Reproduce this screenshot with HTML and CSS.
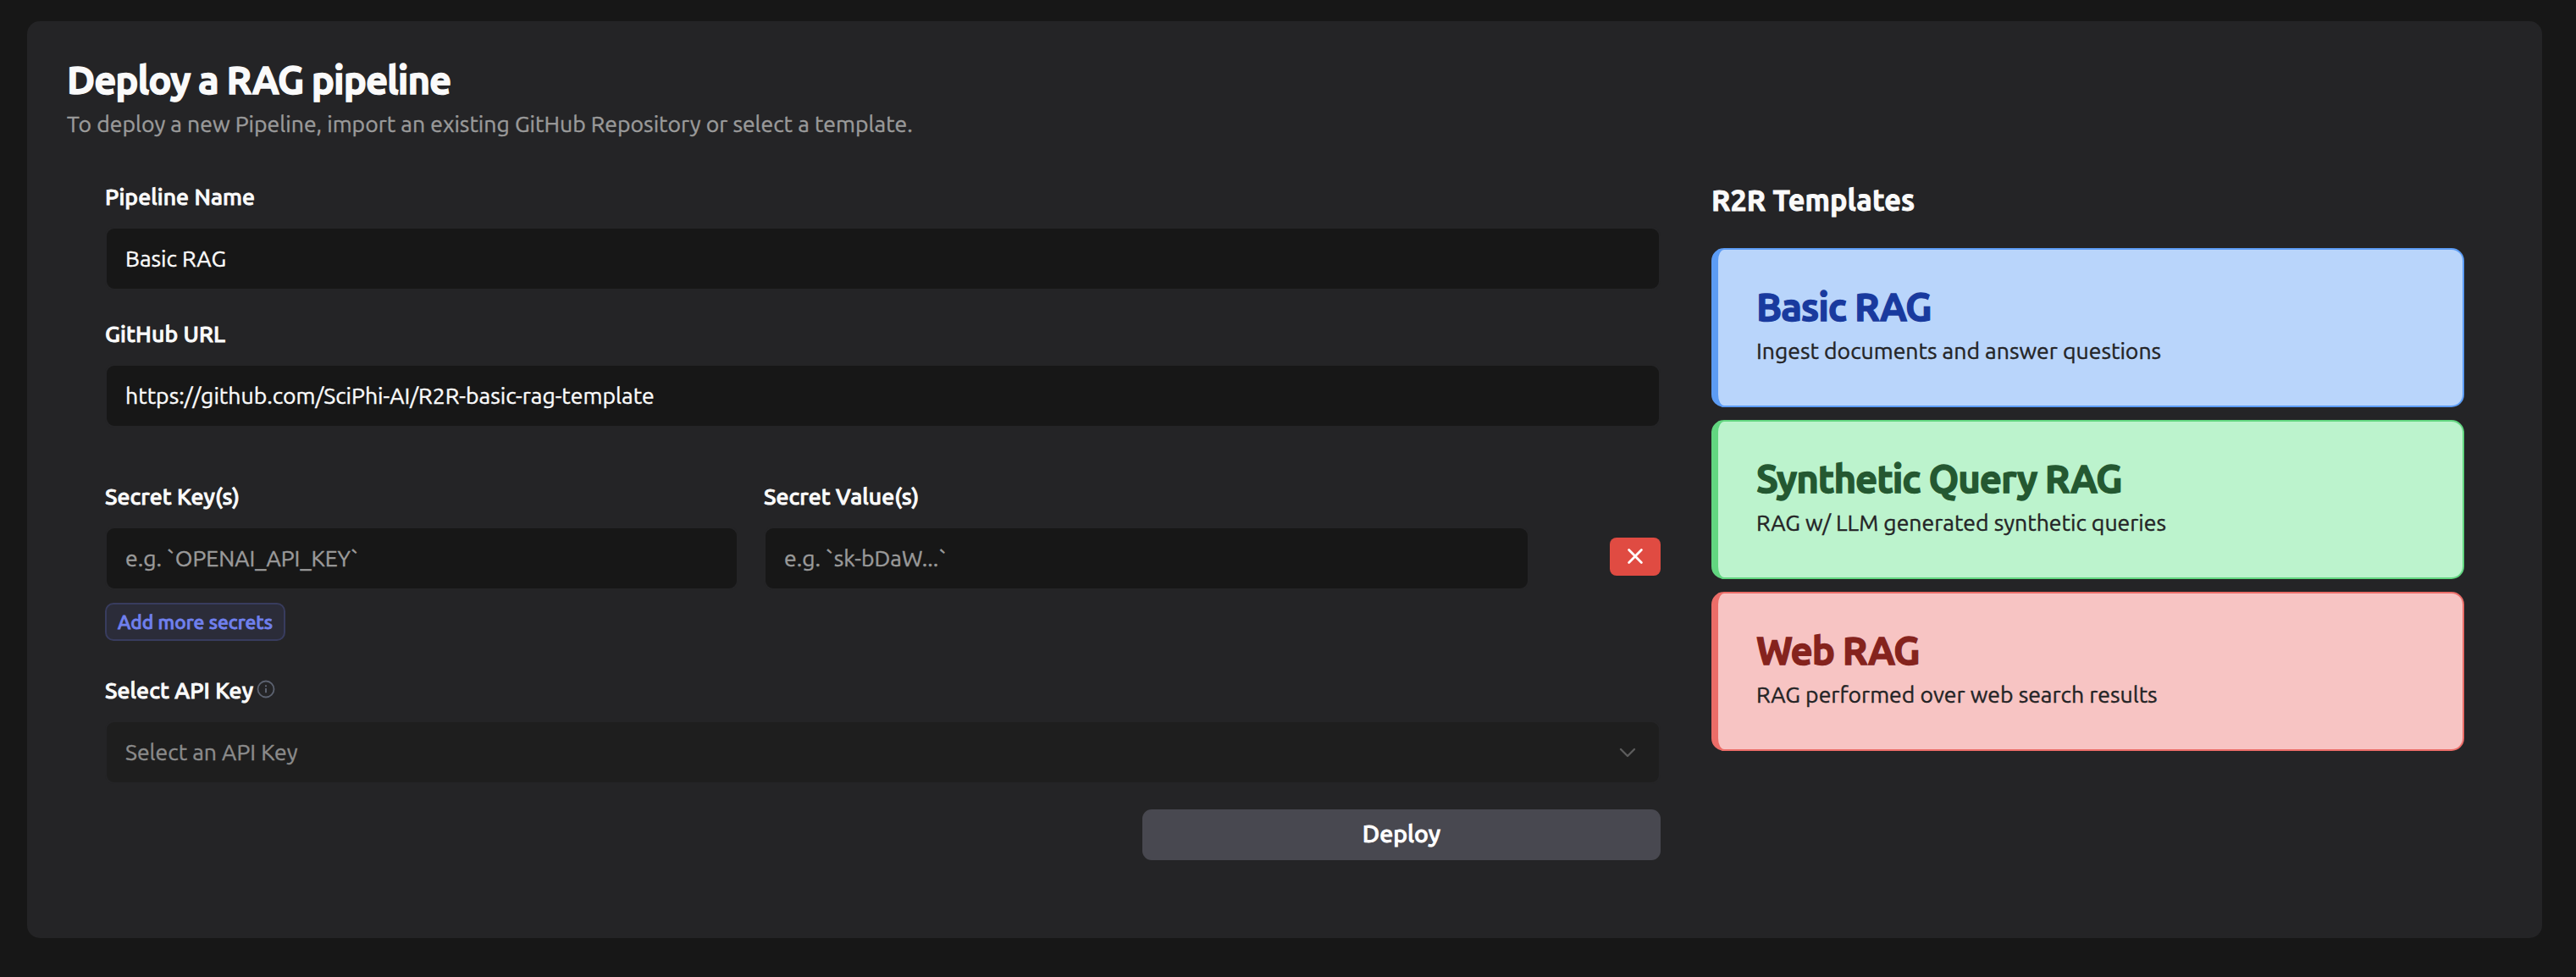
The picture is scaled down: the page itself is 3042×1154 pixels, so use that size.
FILE: index.html
```html
<!DOCTYPE html>
<html lang="en">
<head>
<meta charset="utf-8">
<title>Deploy a RAG pipeline</title>
<link rel="stylesheet" href="styles.css">
</head>
<body>
<main class="panel">
  <header class="panel-header">
    <h1 class="panel-title">Deploy a RAG pipeline</h1>
    <p class="panel-subtitle">To deploy a new Pipeline, import an existing GitHub Repository or select a template.</p>
  </header>
  <div class="columns">
    <form class="form">
      <div class="field">
        <label class="label">Pipeline Name</label>
        <div class="input"><span>Basic RAG</span></div>
      </div>
      <div class="field">
        <label class="label">GitHub URL</label>
        <div class="input"><span>https://github.com/SciPhi-AI/R2R-basic-rag-template</span></div>
      </div>
      <div class="secrets">
        <div class="field field-key">
          <label class="label">Secret Key(s)</label>
          <div class="input placeholder"><span>e.g. `OPENAI_API_KEY`</span></div>
        </div>
        <div class="field field-value">
          <label class="label">Secret Value(s)</label>
          <div class="input placeholder"><span>e.g. `sk-bDaW...`</span></div>
        </div>
        <button class="remove" type="button" aria-label="Remove">
          <svg width="20" height="20" viewBox="0 0 20 20"><path d="M2.6 2.6 17.4 17.4M17.4 2.6 2.6 17.4" fill="none" stroke="#fff" stroke-width="2.8" stroke-linecap="round"/></svg>
        </button>
      </div>
      <button class="add" type="button">Add more secrets</button>
      <div class="field field-api">
        <div class="label-row">
          <label class="label">Select API Key</label>
          <svg class="info" width="22" height="22" viewBox="0 0 22 22"><circle cx="11" cy="11" r="9.5" fill="none" stroke="#5c6270" stroke-width="1.8"/><path d="M11 10v5.2M11 6.3v2" fill="none" stroke="#5c6270" stroke-width="2"/></svg>
        </div>
        <div class="input select"><span>Select an API Key</span>
          <svg class="chevron" width="20" height="12" viewBox="0 0 20 12"><path d="M2 2 10 10 18 2" fill="none" stroke="#5c5c5c" stroke-width="2.4" stroke-linecap="round" stroke-linejoin="round"/></svg>
        </div>
      </div>
      <button class="deploy" type="button">Deploy</button>
    </form>
    <section class="templates">
      <h2 class="templates-title">R2R Templates</h2>
      <article class="card card-blue"><h3>Basic RAG</h3><p>Ingest documents and answer questions</p></article>
      <article class="card card-green"><h3>Synthetic Query RAG</h3><p>RAG w/ LLM generated synthetic queries</p></article>
      <article class="card card-red"><h3>Web RAG</h3><p>RAG performed over web search results</p></article>
    </section>
  </div>
</main>
</body>
</html>
```
FILE: styles.css
```css
* { box-sizing: border-box; }
body {
  margin: 0;
  height: 1154px;
  padding: 25px 40px 46px 32px;
  background: #171717;
  color: #fafafa;
  font-family: Ubuntu, "Noto Sans", sans-serif;
  font-size: 26.6px;
  line-height: 36px;
  -webkit-text-stroke: 0.4px currentColor;
  overflow: hidden;
}
h1, h2, h3, p { margin: 0; }
button { border: 0; font-family: inherit; cursor: pointer; }
svg { display: block; }
.panel { height: 1083px; padding: 40px 92px 0 47px; border-radius: 15px; background: #242426; }
.panel-header { display: flex; flex-direction: column; align-items: flex-start; gap: 3px; margin-bottom: 50px; }
.panel-title { font-size: 45.6px; line-height: 60px; font-weight: 700; letter-spacing: -1.08px; -webkit-text-stroke: 1.3px currentColor; }
.panel-subtitle { color: #9a9a9a; }
.columns { display: flex; align-items: flex-start; gap: 60px; padding-left: 45px; }
.form { display: flex; flex-direction: column; width: 1837px; }
.field { display: flex; flex-direction: column; gap: 18px; margin-bottom: 33px; }
.label { align-self: flex-start; font-weight: 500; letter-spacing: 0.09px; white-space: nowrap; -webkit-text-stroke: 0.9px currentColor; }
.input {
  display: flex;
  align-items: center;
  height: 75px;
  padding: 0 22px 2px;
  border: 2px solid #242426;
  border-radius: 11px;
  background: #171717;
}
.placeholder { color: #9a9a9a; }
.secrets { display: flex; align-items: flex-end; margin-top: 30px; }
.secrets .field { margin-bottom: 0; }
.field-key { width: 748px; margin-right: 30px; }
.field-value { width: 904px; }
.remove {
  display: flex;
  align-items: center;
  justify-content: center;
  width: 60px;
  height: 45px;
  margin: 0 0 17px auto;
  padding: 0 0 1px;
  border-radius: 8px;
  background: #e04b42;
}
.add {
  align-self: flex-start;
  width: 213px;
  height: 45px;
  margin: 15px 0 40px;
  padding: 0;
  border: 2px solid #383c5e;
  border-radius: 10px;
  background: #2b2c39;
  color: #7080ee;
  font-size: 22.8px;
  font-weight: 500;
  white-space: nowrap;
  -webkit-text-stroke: 0.8px currentColor;
}
.field-api { margin-bottom: 30px; }
.label-row { display: flex; align-items: flex-start; gap: 4px; }
.info { margin-top: 6px; }
.select { justify-content: space-between; padding-right: 27px; background: #1e1e1e; color: #8b8b8b; }
.chevron { margin-top: 3px; }
.deploy {
  align-self: flex-end;
  width: 612px;
  height: 60px;
  padding: 0 0 4px;
  border-radius: 11px;
  background: #484850;
  color: #fff;
  font-size: 28.5px;
  font-weight: 500;
  -webkit-text-stroke: 0.9px currentColor;
}
.templates { display: flex; flex-direction: column; gap: 15px; width: 889px; }
.templates-title { align-self: flex-start; margin-bottom: 20px; font-size: 34.2px; line-height: 44px; font-weight: 700; letter-spacing: 0.06px; -webkit-text-stroke: 0.9px currentColor; }
.card {
  display: flex;
  flex-direction: column;
  align-items: flex-start;
  gap: 3px;
  height: 188px;
  padding: 38px 45px 0;
  border: 2px solid;
  border-left-width: 8px;
  border-radius: 15px;
}
.card h3 { font-size: 45.6px; line-height: 60px; font-weight: 700; letter-spacing: -1.08px; -webkit-text-stroke: 1.3px currentColor; }
.card p { color: #242426; }
.card-blue { background: #b9d5fb; border-color: #5c9cf4; }
.card-blue h3 { color: #193a9e; }
.card-green { background: #bcf3cd; border-color: #62d680; }
.card-green h3 { color: #245831; }
.card-red { background: #f7c4c3; border-color: #eb6d68; }
.card-red h3 { color: #85231d; }
```
